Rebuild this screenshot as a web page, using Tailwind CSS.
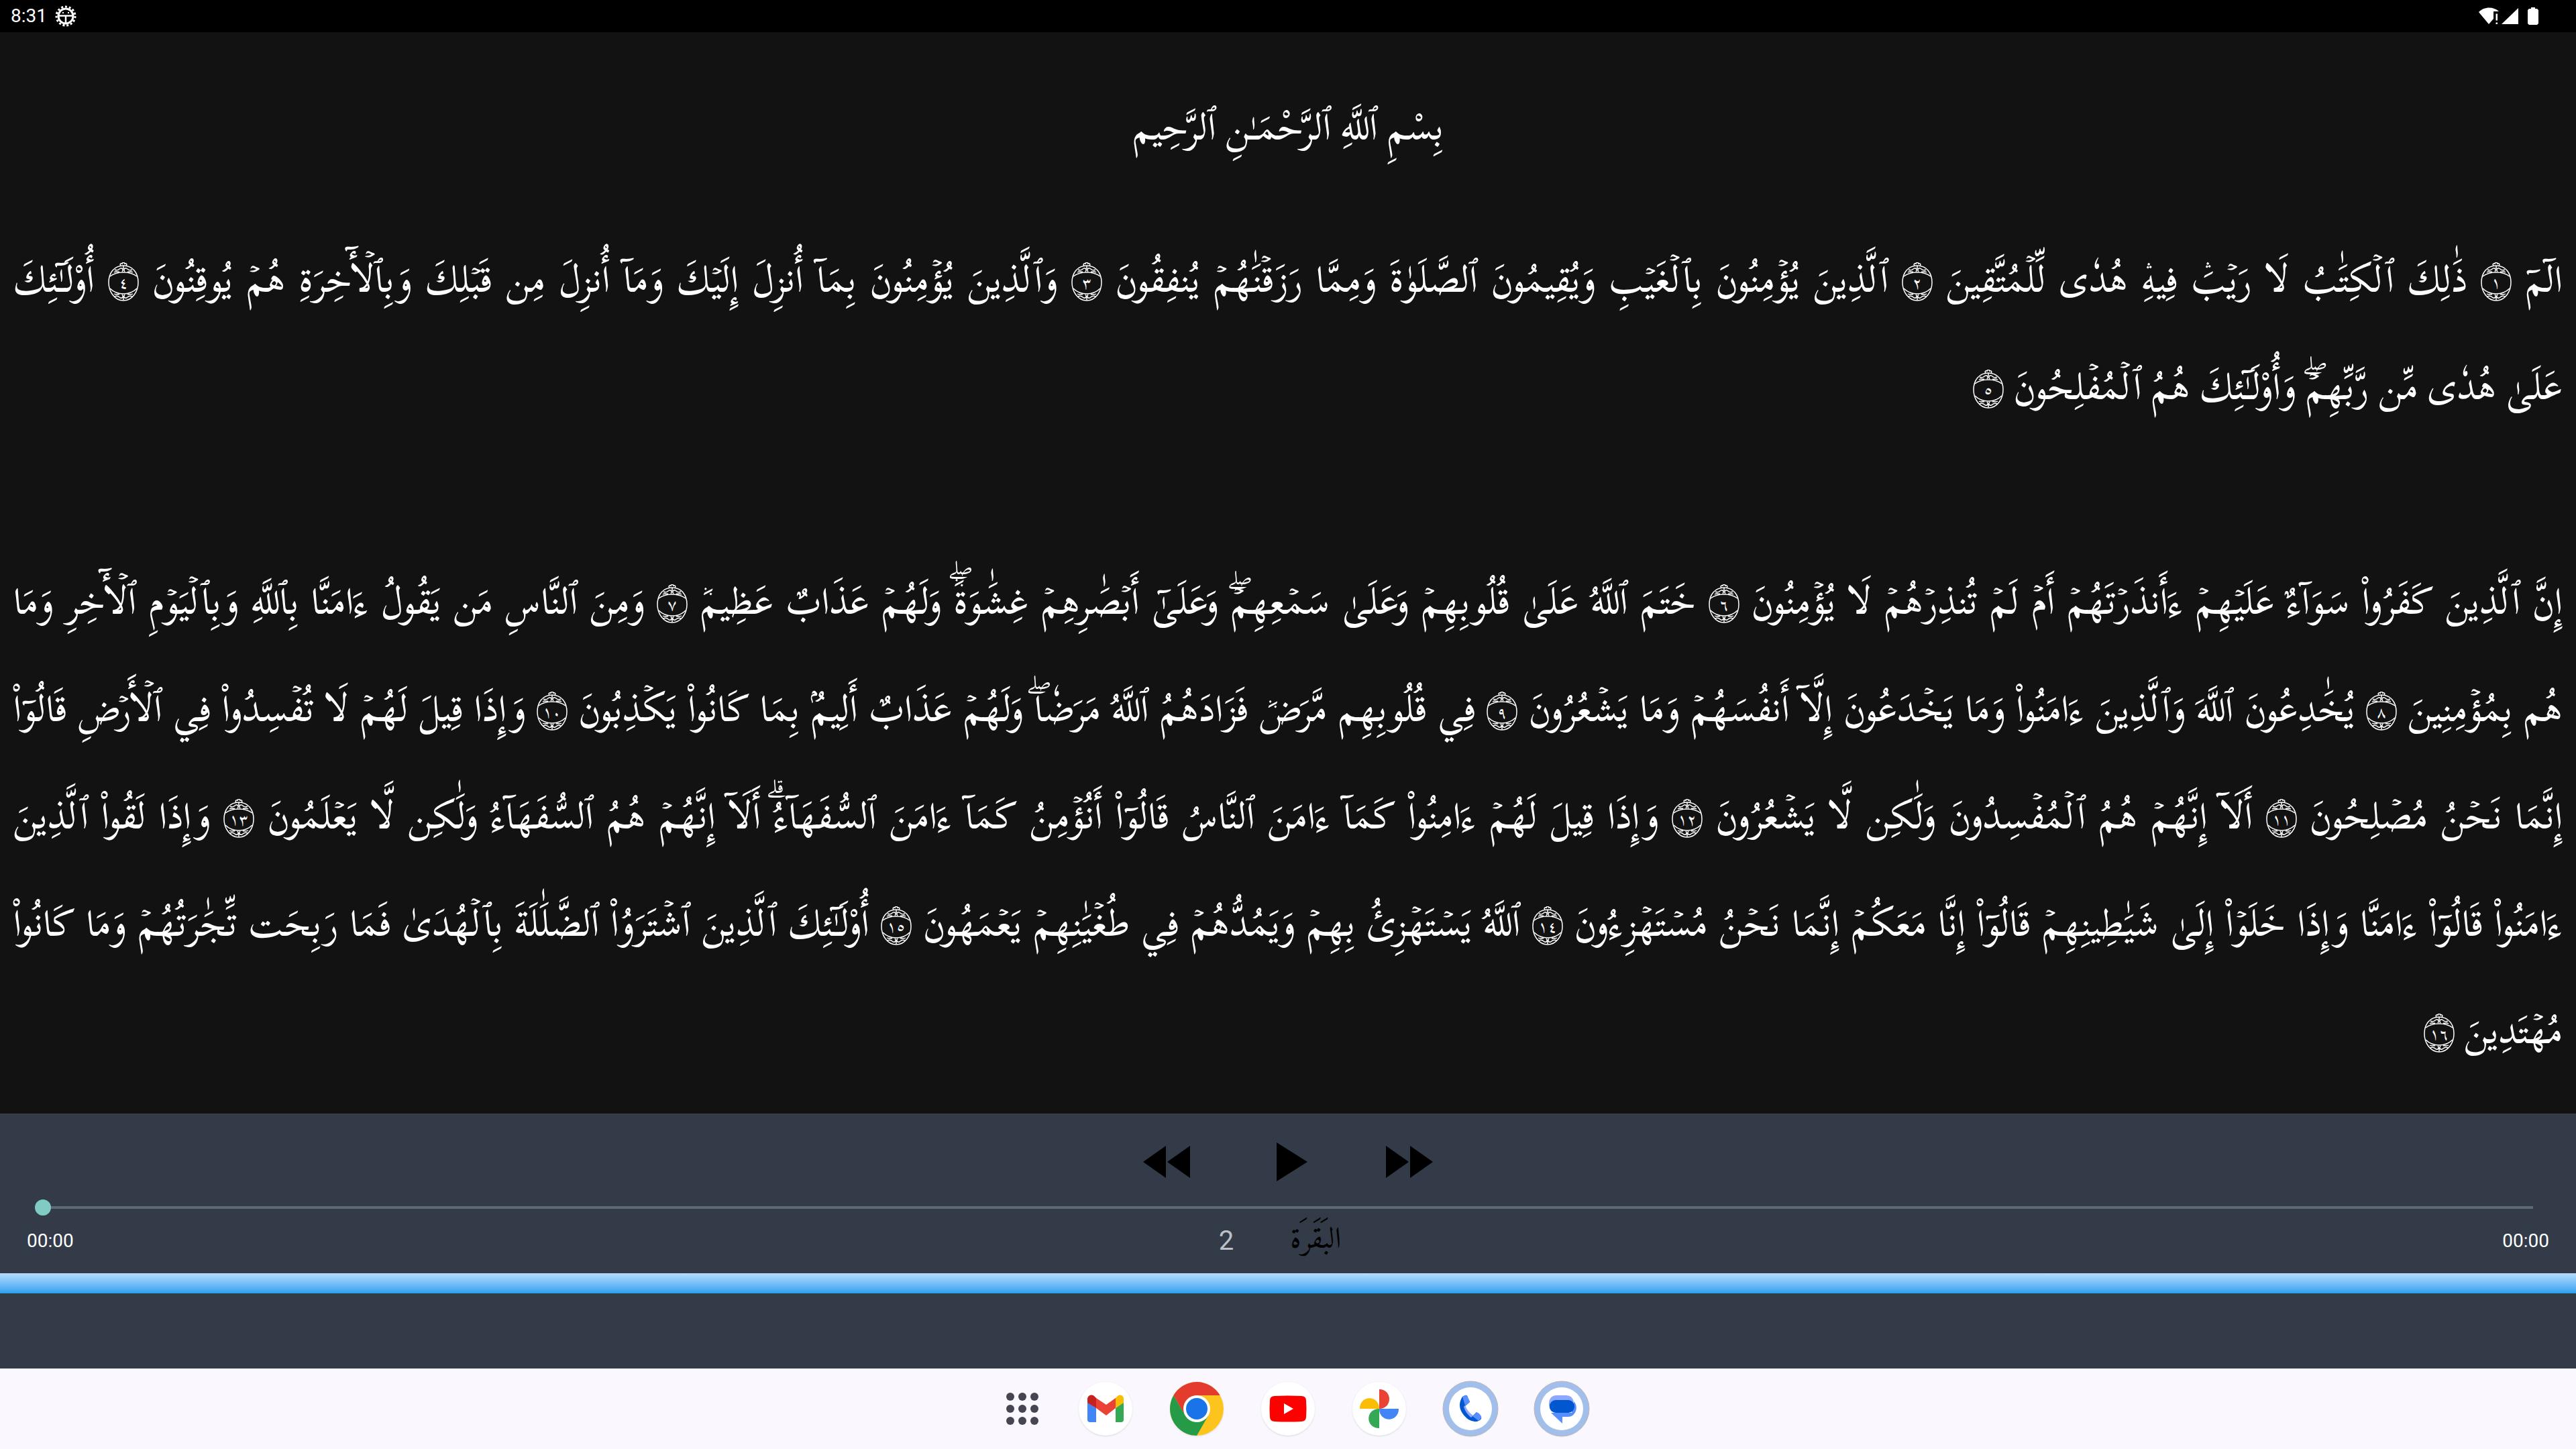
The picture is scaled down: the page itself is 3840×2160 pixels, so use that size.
<!DOCTYPE html>
<html lang="en">
<head>
    <meta charset="UTF-8">
    <meta name="viewport" content="width=device-width, initial-scale=1.0">
    <title>Quran Player</title>
    <!-- Tailwind CSS -->
    <script src="https://cdn.jsdelivr.net/npm/@tailwindcss/browser@4"></script>
</head>
<body class="bg-[#121212] text-white min-h-screen flex flex-col font-['Roboto',sans-serif]">
    <!-- Verse marker ornament, shared by all verses -->
    <svg class="hidden" aria-hidden="true">
        <symbol id="ayah" viewBox="0 0 46 58">
            <g fill="none" stroke="#fff" stroke-width="1.5">
                <path d="M23 5C9 5 1 16 1 30s9 27 22 27 22-13 22-27S37 5 23 5z" />
                <path d="M3 21C8 17 14 15 23 15s15 2 20 6M3 39c5 5 11 8 20 8s15-3 20-8" />
                <path d="M19 5c-2-2 0-4 2-3 0-2 4-2 4 0 2-1 4 1 2 3M23 5v5" />
                <path d="M21 14c3-4-1-7-4-4-2 2-5 2-7 1M25 14c-3-4 1-7 4-4 2 2 5 2 7 1M9 15c3-2 6 0 8-1M37 15c-3-2-6 0-8-1" />
                <path d="M21 48c3 4-1 7-4 4-2-2-5-2-7-1M25 48c-3 4 1 7 4 4 2-2 5-2 7-1M9 47c3 2 6 0 8 1M37 47c-3 2-6 0-8 1M23 51v5" />
            </g>
        </symbol>
    </svg>

    <!-- Status bar -->
    <header class="h-12 bg-black flex items-center justify-between pl-4 pr-14">
        <div class="flex items-center gap-3 text-[28px]">
            <span>8:31</span>
            <svg class="w-8 h-8" viewBox="0 0 32 32" fill="none" stroke="#fff">
                <circle cx="16" cy="16" r="11" stroke-width="3" />
                <circle cx="16" cy="16" r="14" stroke-width="3" stroke-dasharray="3 2.864" />
                <path d="M5 15.500h22M16 16v11" stroke-width="2.500" />
                <path d="M11 11h2M19 11h2" stroke-width="2" />
            </svg>
        </div>
        <div class="flex items-center gap-1">
            <svg class="w-[30px] h-[26px]" viewBox="0 0 30 26" fill="#fff">
                <path d="M0 7C8-1.500 22-1.500 30 6h-8v11l-7 8z" />
                <path d="M25.500 9.500h2.500v10h-2.500zM25.500 22.500h2.500v2.500h-2.500z" />
            </svg>
            <svg class="w-[25px] h-[26px]" viewBox="0 0 25 26" fill="#fff"><path d="M25 1v24H0z" /></svg>
            <svg class="w-4 h-[26px] ml-2.5" viewBox="0 0 16 26" fill="#fff"><path d="M5 0h6v2h3l2 2v20l-2 2H2l-2-2V4l2-2h3z" /></svg>
        </div>
    </header>

    <!-- Verses -->
    <main dir="rtl" lang="ar" class="grow px-5 pt-[62px] text-[55px] font-medium leading-[160px] font-['Scheherazade_New','Amiri_Quran','Noto_Naskh_Arabic',serif]">
        <h1 class="text-center mb-[67px]">بِسْمِ ٱللَّهِ ٱلرَّحْمَـٰنِ ٱلرَّحِيم</h1>

        <section class="mb-40">
            <p class="h-40 whitespace-nowrap [text-align-last:justify]">الٓمٓ <svg class="inline-block overflow-visible leading-none align-[-14px] w-[46px] h-[58px]"><use href="#ayah" /><text x="23" y="38" text-anchor="middle" font-size="24" fill="#fff">١</text></svg> ذَٰلِكَ ٱلۡكِتَٰبُ لَا رَيۡبَۛ فِيهِۛ هُدٗى لِّلۡمُتَّقِينَ <svg class="inline-block overflow-visible leading-none align-[-14px] w-[46px] h-[58px]"><use href="#ayah" /><text x="23" y="38" text-anchor="middle" font-size="24" fill="#fff">٢</text></svg> ٱلَّذِينَ يُؤۡمِنُونَ بِٱلۡغَيۡبِ وَيُقِيمُونَ ٱلصَّلَوٰةَ وَمِمَّا رَزَقۡنَٰهُمۡ يُنفِقُونَ <svg class="inline-block overflow-visible leading-none align-[-14px] w-[46px] h-[58px]"><use href="#ayah" /><text x="23" y="38" text-anchor="middle" font-size="24" fill="#fff">٣</text></svg> وَٱلَّذِينَ يُؤۡمِنُونَ بِمَآ أُنزِلَ إِلَيۡكَ وَمَآ أُنزِلَ مِن قَبۡلِكَ وَبِٱلۡأٓخِرَةِ هُمۡ يُوقِنُونَ <svg class="inline-block overflow-visible leading-none align-[-14px] w-[46px] h-[58px]"><use href="#ayah" /><text x="23" y="38" text-anchor="middle" font-size="24" fill="#fff">٤</text></svg> أُوْلَـٰٓئِكَ</p>
            <p class="h-40 whitespace-nowrap">عَلَىٰ هُدٗى مِّن رَّبِّهِمۡۖ وَأُوْلَـٰٓئِكَ هُمُ ٱلۡمُفۡلِحُونَ <svg class="inline-block overflow-visible leading-none align-[-14px] w-[46px] h-[58px]"><use href="#ayah" /><text x="23" y="38" text-anchor="middle" font-size="24" fill="#fff">٥</text></svg></p>
        </section>

        <section>
            <p class="h-40 whitespace-nowrap [text-align-last:justify]">إِنَّ ٱلَّذِينَ كَفَرُواْ سَوَآءٌ عَلَيۡهِمۡ ءَأَنذَرۡتَهُمۡ أَمۡ لَمۡ تُنذِرۡهُمۡ لَا يُؤۡمِنُونَ <svg class="inline-block overflow-visible leading-none align-[-14px] w-[46px] h-[58px]"><use href="#ayah" /><text x="23" y="38" text-anchor="middle" font-size="24" fill="#fff">٦</text></svg> خَتَمَ ٱللَّهُ عَلَىٰ قُلُوبِهِمۡ وَعَلَىٰ سَمۡعِهِمۡۖ وَعَلَىٰٓ أَبۡصَٰرِهِمۡ غِشَٰوَةٞۖ وَلَهُمۡ عَذَابٌ عَظِيمٞ <svg class="inline-block overflow-visible leading-none align-[-14px] w-[46px] h-[58px]"><use href="#ayah" /><text x="23" y="38" text-anchor="middle" font-size="24" fill="#fff">٧</text></svg> وَمِنَ ٱلنَّاسِ مَن يَقُولُ ءَامَنَّا بِٱللَّهِ وَبِٱلۡيَوۡمِ ٱلۡأٓخِرِ وَمَا</p>
            <p class="h-40 whitespace-nowrap [text-align-last:justify]">هُم بِمُؤۡمِنِينَ <svg class="inline-block overflow-visible leading-none align-[-14px] w-[46px] h-[58px]"><use href="#ayah" /><text x="23" y="38" text-anchor="middle" font-size="24" fill="#fff">٨</text></svg> يُخَٰدِعُونَ ٱللَّهَ وَٱلَّذِينَ ءَامَنُواْ وَمَا يَخۡدَعُونَ إِلَّآ أَنفُسَهُمۡ وَمَا يَشۡعُرُونَ <svg class="inline-block overflow-visible leading-none align-[-14px] w-[46px] h-[58px]"><use href="#ayah" /><text x="23" y="38" text-anchor="middle" font-size="24" fill="#fff">٩</text></svg> فِي قُلُوبِهِم مَّرَضٞ فَزَادَهُمُ ٱللَّهُ مَرَضٗاۖ وَلَهُمۡ عَذَابٌ أَلِيمُۢ بِمَا كَانُواْ يَكۡذِبُونَ <svg class="inline-block overflow-visible leading-none align-[-14px] w-[46px] h-[58px]"><use href="#ayah" /><text x="23" y="38" text-anchor="middle" font-size="24" fill="#fff">١٠</text></svg> وَإِذَا قِيلَ لَهُمۡ لَا تُفۡسِدُواْ فِي ٱلۡأَرۡضِ قَالُوٓاْ</p>
            <p class="h-40 whitespace-nowrap [text-align-last:justify]">إِنَّمَا نَحۡنُ مُصۡلِحُونَ <svg class="inline-block overflow-visible leading-none align-[-14px] w-[46px] h-[58px]"><use href="#ayah" /><text x="23" y="38" text-anchor="middle" font-size="24" fill="#fff">١١</text></svg> أَلَآ إِنَّهُمۡ هُمُ ٱلۡمُفۡسِدُونَ وَلَٰكِن لَّا يَشۡعُرُونَ <svg class="inline-block overflow-visible leading-none align-[-14px] w-[46px] h-[58px]"><use href="#ayah" /><text x="23" y="38" text-anchor="middle" font-size="24" fill="#fff">١٢</text></svg> وَإِذَا قِيلَ لَهُمۡ ءَامِنُواْ كَمَآ ءَامَنَ ٱلنَّاسُ قَالُوٓاْ أَنُؤۡمِنُ كَمَآ ءَامَنَ ٱلسُّفَهَآءُۗ أَلَآ إِنَّهُمۡ هُمُ ٱلسُّفَهَآءُ وَلَٰكِن لَّا يَعۡلَمُونَ <svg class="inline-block overflow-visible leading-none align-[-14px] w-[46px] h-[58px]"><use href="#ayah" /><text x="23" y="38" text-anchor="middle" font-size="24" fill="#fff">١٣</text></svg> وَإِذَا لَقُواْ ٱلَّذِينَ</p>
            <p class="h-40 whitespace-nowrap [text-align-last:justify]">ءَامَنُواْ قَالُوٓاْ ءَامَنَّا وَإِذَا خَلَوۡاْ إِلَىٰ شَيَٰطِينِهِمۡ قَالُوٓاْ إِنَّا مَعَكُمۡ إِنَّمَا نَحۡنُ مُسۡتَهۡزِءُونَ <svg class="inline-block overflow-visible leading-none align-[-14px] w-[46px] h-[58px]"><use href="#ayah" /><text x="23" y="38" text-anchor="middle" font-size="24" fill="#fff">١٤</text></svg> ٱللَّهُ يَسۡتَهۡزِئُ بِهِمۡ وَيَمُدُّهُمۡ فِي طُغۡيَٰنِهِمۡ يَعۡمَهُونَ <svg class="inline-block overflow-visible leading-none align-[-14px] w-[46px] h-[58px]"><use href="#ayah" /><text x="23" y="38" text-anchor="middle" font-size="24" fill="#fff">١٥</text></svg> أُوْلَـٰٓئِكَ ٱلَّذِينَ ٱشۡتَرَوُاْ ٱلضَّلَٰلَةَ بِٱلۡهُدَىٰ فَمَا رَبِحَت تِّجَٰرَتُهُمۡ وَمَا كَانُواْ</p>
            <p class="h-40 whitespace-nowrap">مُهۡتَدِينَ <svg class="inline-block overflow-visible leading-none align-[-14px] w-[46px] h-[58px]"><use href="#ayah" /><text x="23" y="38" text-anchor="middle" font-size="24" fill="#fff">١٦</text></svg></p>
        </section>
    </main>

    <!-- Player -->
    <footer class="bg-[#323b47] border-t border-[#444] h-[380px]">
        <div class="flex justify-center gap-[117px] pt-[35px]">
            <button aria-label="Previous"><svg class="w-[70px] h-[72px]" viewBox="0 0 70 72"><path d="M0 36l34-24v48zM36 36l34-24v48z" /></svg></button>
            <button aria-label="Play"><svg class="w-[58px] h-[72px]" viewBox="0 0 58 72"><path d="M12 7l46 29-46 29z" /></svg></button>
            <button aria-label="Next"><svg class="w-[70px] h-[72px]" viewBox="0 0 70 72"><path d="M0 12l34 24-34 24zM36 12l34 24-34 24z" /></svg></button>
        </div>
        <div class="px-[52px] pt-5 pb-2 flex">
            <input type="range" min="0" max="100" value="0" aria-label="Playback position" class="appearance-none w-full h-6 bg-transparent bg-linear-to-r from-[#5f6971] to-[#5f6971] bg-no-repeat bg-center bg-[length:calc(100%-24px)_4px] [&::-webkit-slider-thumb]:appearance-none [&::-webkit-slider-thumb]:size-6 [&::-webkit-slider-thumb]:rounded-full [&::-webkit-slider-thumb]:bg-[#80cbc4]">
        </div>
        <div class="grid grid-cols-3 items-center px-10 h-[60px] text-[28px]">
            <span>00:00</span>
            <div class="flex items-center justify-center gap-[84px] pr-6">
                <span class="text-[40px] text-[#bdc1c5]">2</span>
                <span lang="ar" dir="rtl" class="text-black text-[44px] leading-[60px] font-['Amiri','Noto_Naskh_Arabic',serif]">البَقَرَة</span>
            </div>
            <span class="text-right">00:00</span>
        </div>
        <div class="mt-[18px] h-[30px] bg-linear-to-b from-[#b5dcfd] to-[#25a0ef]"></div>
    </footer>

    <!-- Taskbar -->
    <nav class="h-[120px] bg-[#faf8fe] flex items-center justify-center gap-8">
        <button aria-label="All apps" class="w-[104px] flex justify-center">
            <svg class="w-12 h-12" viewBox="0 0 48 48" fill="#464652">
                <circle cx="6" cy="6" r="6" /><circle cx="24" cy="6" r="6" /><circle cx="42" cy="6" r="6" />
                <circle cx="6" cy="24" r="6" /><circle cx="24" cy="24" r="6" /><circle cx="42" cy="24" r="6" />
                <circle cx="6" cy="42" r="6" /><circle cx="24" cy="42" r="6" /><circle cx="42" cy="42" r="6" />
            </svg>
        </button>
        <div class="flex gap-14">
            <button aria-label="Gmail" class="rounded-full bg-white shadow">
                <svg class="w-20 h-20" viewBox="0 0 80 80">
                    <path d="M13 30l13 9v21H17q-4 0-4-4z" fill="#4285f4" />
                    <path d="M67 30l-12 9v21h8q4 0 4-4z" fill="#34a853" />
                    <path d="M26 24l15 10 14-10v15L41 50 26 39z" fill="#ea4335" />
                    <path d="M13 31v-5c0-6 6-8 10-5l3 3v15z" fill="#c5221f" />
                    <path d="M67 31v-5c0-6-5-8-9-5l-3 3v15z" fill="#fbbc04" />
                </svg>
            </button>
            <button aria-label="Chrome" class="rounded-full shadow">
                <svg class="w-20 h-20" viewBox="0 0 80 80">
                    <circle cx="40" cy="40" r="40" fill="#fcc41c" />
                    <path d="M5.400 20a40 40 0 0 1 69.200 0H40L22.700 50z" fill="#e33b2e" />
                    <path d="M5.400 20A40 40 0 0 0 40 80l17.300-30L40 58 22.700 50z" fill="#259a47" />
                    <circle cx="40" cy="40" r="20" fill="#fff" />
                    <circle cx="40" cy="40" r="16" fill="#1a73e8" />
                </svg>
            </button>
            <button aria-label="YouTube" class="rounded-full bg-white shadow">
                <svg class="w-20 h-20" viewBox="0 0 80 80">
                    <path d="M20 21q20-1 40 0 7 0 7 7 1 12 0 24 0 7-7 7-20 1-40 0-7 0-7-7-1-12 0-24 0-7 7-7z" fill="#f00" />
                    <path d="M34 32v16l14-8z" fill="#fff" />
                </svg>
            </button>
            <button aria-label="Photos" class="rounded-full bg-white shadow">
                <svg class="w-20 h-20" viewBox="0 0 80 80">
                    <path d="M40 11c20 0 20 29 0 29z" fill="#ea4335" />
                    <path d="M69 40c0 21-29 21-29 0z" fill="#4285f4" />
                    <path d="M40 69c-21 0-21-29 0-29z" fill="#34a853" />
                    <path d="M11 40c0-21 29-21 29 0z" fill="#fbbc04" />
                </svg>
            </button>
            <button aria-label="Phone" class="rounded-full shadow">
                <svg class="w-20 h-20 overflow-visible" viewBox="0 0 80 80">
                    <circle cx="40" cy="40" r="41" fill="#a2bfeb" stroke="#b9b7bb" stroke-width="1" />
                    <circle cx="40" cy="40" r="32" fill="#fff" />
                    <path d="M28 22l4-2q3-1 4 3l3 7-7 6q3 10 11 15l6-6 7 7q1 3-2 5-7 5-17-1C23 45 21 33 28 22z" fill="#0057cf" />
                    <path d="M28 22l4-2q3-1 4 3l3 6q0 2-7 6z" fill="#598eff" />
                    <path d="M43 51l6-5q3-1 7 5 1 3-4 7z" fill="#598eff" />
                    <path d="M32 35l-2 2q3 10 11 16l3-3q-8-5-12-15z" fill="#8fa8ff" />
                </svg>
            </button>
            <button aria-label="Messages" class="rounded-full shadow">
                <svg class="w-20 h-20 overflow-visible" viewBox="0 0 80 80">
                    <circle cx="40" cy="40" r="41" fill="#a2bfeb" stroke="#b9b7bb" stroke-width="1" />
                    <circle cx="40" cy="40" r="32" fill="#fff" />
                    <path d="M24 46h31l3-17c5 5 5 13 1 18q-3 5-10 5h-8v10z" fill="#598eff" />
                    <path d="M32 20h15q9 0 11 10L25 44c-7-9-5-24 7-24z" fill="#8fa8ff" />
                    <rect x="22" y="27" width="37" height="19" rx="9" fill="#0057cf" />
                </svg>
            </button>
        </div>
    </nav>
</body>
</html>
